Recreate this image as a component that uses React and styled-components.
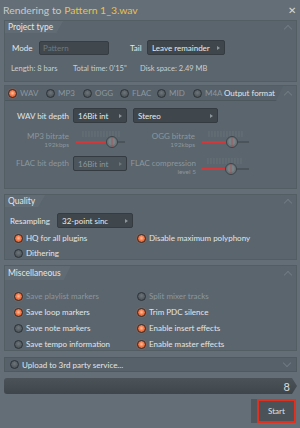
import React from 'react';
import styled, { createGlobalStyle } from 'styled-components';

const Global = createGlobalStyle`
  html, body { margin: 0; padding: 0; background: #646e76; }
  body { font-family: Lato, "Noto Sans", sans-serif; }
`;

const Window = styled.div`
  width: 300px;
  height: 428px;
  background: #646e76;
  display: flex;
  flex-direction: column;
  box-sizing: border-box;
  overflow: hidden;
  color: #dfe3e6;
  font-size: 8px;
  white-space: nowrap;
`;

const TitleBar = styled.div`
  height: 20px;
  flex-shrink: 0;
  display: flex;
  align-items: center;
  justify-content: space-between;
  padding: 0 4px 0 3px;
  font-size: 10.4px;
  color: #c4cacd;
`;

const Accent = styled.span`
  color: #e9c04c;
`;

const Close = styled.span`
  font-size: 10px;
  color: #d3d7da;
`;

const Panel = styled.div`
  margin: ${p => p.$mt || 0}px 3px 0 4px;
  height: ${p => p.$h}px;
  flex-shrink: 0;
  background: #5a656d;
  border: 1px solid #535d64;
  box-sizing: border-box;
  display: flex;
  flex-direction: column;
`;

const HeaderRow = styled.div`
  height: ${p => p.$h || 12}px;
  display: flex;
  align-items: center;
  justify-content: space-between;
  flex-shrink: 0;
`;

const HeaderTab = styled.div`
  height: 100%;
  display: flex;
  align-items: center;
  padding: 0 10px 0 3px;
  background: #606b73;
  clip-path: polygon(0 0, 100% 0, calc(100% - 7px) 100%, 0 100%);
  font-size: 8.5px;
  color: #e3e6e8;
`;

const Caret = styled.span`
  width: 5px;
  height: 5px;
  border-left: 1px solid #6f7a82;
  border-top: 1px solid #6f7a82;
  transform: ${p => (p.$down ? 'rotate(225deg)' : 'rotate(45deg)')};
  margin: ${p => (p.$down ? '0 6px 3px 0' : '3px 5px 0 0')};
  flex-shrink: 0;
`;

const Row = styled.div`
  display: flex;
  align-items: center;
  padding-left: ${p => p.$pl || 0}px;
  margin-top: ${p => p.$mt || 0}px;
  height: ${p => p.$h}px;
  flex-shrink: 0;
`;

const Label = styled.span`
  font-size: 8px;
  color: ${p => (p.$dim ? '#8d979e' : '#e3e6e8')};
  width: ${p => (p.$w ? p.$w + 'px' : 'auto')};
  text-align: ${p => (p.$right ? 'right' : 'left')};
  flex-shrink: 0;
`;

const Input = styled.div`
  width: ${p => p.$w}px;
  height: 14px;
  background: #40484e;
  border: 1px solid #363d42;
  border-radius: 2px;
  box-sizing: border-box;
  display: flex;
  align-items: center;
  padding-left: 3px;
  font-size: 8px;
  color: #6f787e;
`;

const Select = styled.div`
  width: ${p => p.$w}px;
  height: 15px;
  flex-shrink: 0;
  background: ${p => (p.$dim ? '#4c555b' : '#3f474d')};
  border: 1px solid #353c41;
  border-radius: 2px;
  box-sizing: border-box;
  display: flex;
  align-items: center;
  justify-content: space-between;
  padding: 0 4px;
  font-size: 8px;
  color: ${p => (p.$dim ? '#8e979d' : '#e6e9eb')};
  &::after {
    content: '';
    border-left: 3px solid ${p => (p.$dim ? '#6f777c' : '#8d969b')};
    border-top: 2px solid transparent;
    border-bottom: 2px solid transparent;
  }
`;

const Info = styled.span`
  font-size: 7.5px;
  color: #c9ced1;
  width: ${p => (p.$w ? p.$w + 'px' : 'auto')};
`;

const Dot = styled.span`
  width: 9px;
  height: 9px;
  border-radius: 50%;
  box-sizing: border-box;
  flex-shrink: 0;
  border: 1px solid ${p => (p.$on ? '#3b2b26' : '#2d3337')};
  background: ${p =>
    p.$on
      ? 'radial-gradient(circle at 50% 45%, #ffc2a0 0%, #f17a4b 45%, #c9481f 100%)'
      : 'radial-gradient(circle at 50% 40%, #6e767b 0%, #4e565b 70%, #40474c 100%)'};
  box-shadow: ${p => (p.$on ? '0 0 2px rgba(240,110,60,0.6)' : 'none')};
`;

const RadioItem = styled.div`
  display: flex;
  align-items: center;
  gap: 3px;
  font-size: 8px;
  color: ${p => (p.$dim ? '#8d979e' : '#e3e6e8')};
  width: ${p => (p.$w ? p.$w + 'px' : 'auto')};
  flex-shrink: 0;
`;

const Radio = ({ on, dim, w, children }) => (
  <RadioItem $dim={dim} $w={w}>
    <Dot $on={on} />
    {children}
  </RadioItem>
);

const FormatBar = styled.div`
  height: 15px;
  display: flex;
  align-items: center;
  justify-content: space-between;
  flex-shrink: 0;
`;

const FormatTabs = styled.div`
  flex: 1;
  height: 100%;
  display: flex;
  align-items: center;
  padding-left: 3px;
  background: #56616a;
  border-bottom: 1px solid #4c565d;
  box-sizing: border-box;
  clip-path: polygon(0 0, 100% 0, calc(100% - 7px) 100%, 0 100%);
  margin-right: 2px;
`;

const FormatTitle = styled.span`
  margin-left: auto;
  margin-right: 8px;
  font-size: 8px;
  color: #e3e6e8;
`;

const Stack = styled.div`
  display: flex;
  flex-direction: column;
  align-items: flex-end;
  width: ${p => p.$w}px;
  flex-shrink: 0;
`;

const Small = styled.span`
  font-size: 6.5px;
  color: #8d979e;
  line-height: 8px;
`;

const SliderBox = styled.div`
  width: ${p => p.$w}px;
  height: 18px;
  flex-shrink: 0;
  display: flex;
  align-items: center;
  margin-left: ${p => p.$ml || 0}px;
  margin-top: -3px;
`;

const Slider = ({ w, pos, ml }) => (
  <SliderBox $w={w} $ml={ml}>
    <svg width={w} height="18" viewBox={`0 0 ${w} 18`}>
      {Array.from({ length: Math.floor((w - 16) / 3) + 1 }).map((_, i) => (
        <line key={i} x1={8 + i * 3} x2={8 + i * 3} y1="1" y2="7" stroke="#6a747b" strokeWidth="0.8" />
      ))}
      <line x1="1" x2={w - 2} y1="12" y2="12" stroke="#4b545a" strokeWidth="2" />
      <line x1="1" x2={pos} y1="12" y2="12" stroke="#d2383a" strokeWidth="2" />
      <circle cx={pos} cy="12" r="5.5" fill="#6b7479" stroke="#3c4448" strokeWidth="1" />
      <circle cx={pos} cy="11.5" r="3.5" fill="#798287" />
      <line x1={pos} x2={pos} y1="7" y2="17" stroke="#c43b3b" strokeWidth="0.8" opacity="0.7" />
    </svg>
  </SliderBox>
);

const Grid = styled.div`
  display: grid;
  grid-template-columns: 123px 1fr;
  row-gap: ${p => p.$gap || 5}px;
  padding-left: ${p => p.$pl || 9}px;
  margin-top: ${p => p.$mt || 0}px;
`;

const UploadBar = styled.div`
  margin: 6px 3px 0 4px;
  height: 15px;
  flex-shrink: 0;
  background: #56616a;
  border: 1px solid #4f5960;
  box-sizing: border-box;
  display: flex;
  align-items: center;
  justify-content: space-between;
  padding-left: 5px;
`;

const Progress = styled.div`
  margin: 6px 3px 0 4px;
  height: 16px;
  flex-shrink: 0;
  display: flex;
  align-items: center;
  justify-content: flex-end;
  padding-right: 7px;
  background: linear-gradient(#4b5359, #3f464b);
  border-radius: 3px 0 0 3px;
  clip-path: polygon(0 0, calc(100% - 5px) 0, 100% 50%, calc(100% - 5px) 100%, 0 100%);
  font-size: 11px;
  color: #d8dcdf;
`;

const Footer = styled.div`
  margin-top: 5px;
  display: flex;
  justify-content: flex-end;
  padding-right: 4px;
  flex-shrink: 0;
`;

const StartShell = styled.div`
  display: flex;
  background: #50585d;
  padding-left: 6px;
`;

const StartButton = styled.div`
  width: 39px;
  height: 24px;
  box-sizing: border-box;
  background: #4b5358;
  border: 2px solid #e0301f;
  display: flex;
  align-items: center;
  justify-content: center;
  font-size: 8px;
  color: #dfe3e6;
`;

export default function App() {
  return (
    <Window>
      <Global />
      <TitleBar>
        <span>
          Rendering to <Accent>Pattern 1_3.wav</Accent>
        </span>
        <Close>✕</Close>
      </TitleBar>

      <Panel $h={62}>
        <HeaderRow>
          <HeaderTab>Project type</HeaderTab>
          <Caret />
        </HeaderRow>
        <Row $pl={7} $mt={7} $h={15}>
          <Label $w={27}>Mode</Label>
          <Input $w={70}>Pattern</Input>
          <Label style={{ marginLeft: 21 }} $w={17}>Tail</Label>
          <Select $w={78}>Leave remainder</Select>
        </Row>
        <Row $pl={6} $mt={8} $h={10}>
          <Info $w={62}>Length: 8 bars</Info>
          <Info $w={67}>Total time: 0'15"</Info>
          <Info>Disk space: 2.49 MB</Info>
        </Row>
      </Panel>

      <Panel $h={104} $mt={3}>
        <FormatBar>
          <FormatTabs>
            <Radio on dim w={38}>WAV</Radio>
            <Radio dim w={37}>MP3</Radio>
            <Radio dim w={37}>OGG</Radio>
            <Radio dim w={37}>FLAC</Radio>
            <Radio dim w={36}>MID</Radio>
            <Radio dim w={26}>M4A</Radio>
            <FormatTitle>Output format</FormatTitle>
          </FormatTabs>
          <Caret />
        </FormatBar>
        <Row $pl={6} $mt={7} $h={15}>
          <Label $w={58} $right>WAV bit depth</Label>
          <Select $w={54} style={{ marginLeft: 4 }}>16Bit int</Select>
          <Select $w={85} style={{ marginLeft: 6 }}>Stereo</Select>
        </Row>
        <Row $pl={6} $mt={6} $h={22}>
          <Stack $w={58}>
            <Label $dim>MP3 bitrate</Label>
            <Small>192kbps</Small>
          </Stack>
          <Slider w={52} pos={37} ml={6} />
          <Stack $w={68}>
            <Label $dim>OGG bitrate</Label>
            <Small>192kbps</Small>
          </Stack>
          <Slider w={50} pos={31} ml={6} />
        </Row>
        <Row $pl={6} $mt={5} $h={22}>
          <Stack $w={58} style={{ alignSelf: 'flex-start' }}>
            <Label $dim style={{ lineHeight: '15px' }}>FLAC bit depth</Label>
          </Stack>
          <Select $dim $w={54} style={{ marginLeft: 4, alignSelf: 'flex-start' }}>16Bit int</Select>
          <Stack $w={68} style={{ marginLeft: 1 }}>
            <Label $dim>FLAC compression</Label>
            <Small>level 5</Small>
          </Stack>
          <Slider w={51} pos={31} ml={4} />
        </Row>
      </Panel>

      <Panel $h={66} $mt={5}>
        <HeaderRow>
          <HeaderTab>Quality</HeaderTab>
          <Caret />
        </HeaderRow>
        <Row $pl={5} $mt={6} $h={15}>
          <Label $w={47}>Resampling</Label>
          <Select $w={76}>32-point sinc</Select>
        </Row>
        <Grid $mt={5} $pl={9}>
          <Radio on>HQ for all plugins</Radio>
          <Radio on>Disable maximum polyphony</Radio>
          <Radio>Dithering</Radio>
        </Grid>
      </Panel>

      <Panel $h={86} $mt={5}>
        <HeaderRow $h={14}>
          <HeaderTab>Miscellaneous</HeaderTab>
          <Caret />
        </HeaderRow>
        <Grid $mt={11} $pl={9} $gap={6}>
          <Radio on dim>Save playlist markers</Radio>
          <Radio dim>Split mixer tracks</Radio>
          <Radio on>Save loop markers</Radio>
          <Radio on>Trim PDC silence</Radio>
          <Radio>Save note markers</Radio>
          <Radio on>Enable insert effects</Radio>
          <Radio>Save tempo information</Radio>
          <Radio on>Enable master effects</Radio>
        </Grid>
      </Panel>

      <UploadBar>
        <Radio>Upload to 3rd party service...</Radio>
        <Caret $down />
      </UploadBar>

      <Progress>8</Progress>

      <Footer>
        <StartShell>
          <StartButton>Start</StartButton>
        </StartShell>
      </Footer>
    </Window>
  );
}
